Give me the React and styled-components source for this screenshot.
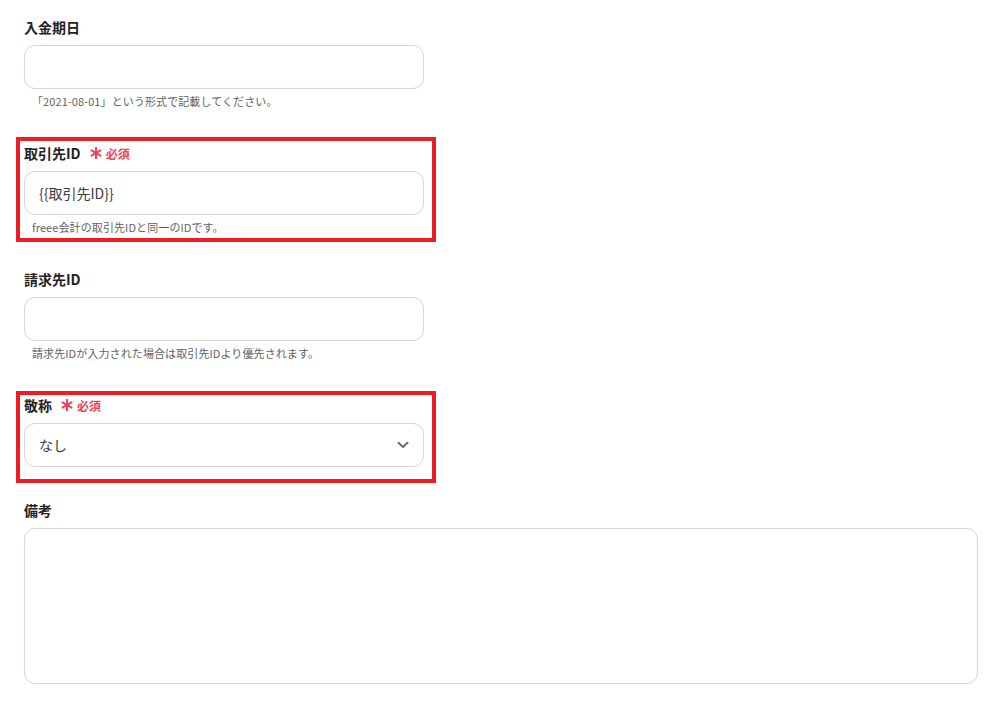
import React from "react";
import styled, { createGlobalStyle, css } from "styled-components";

const GlobalStyle = createGlobalStyle`
  body {
    margin: 0;
    background: #ffffff;
    font-family: "Noto Sans CJK JP", "Noto Sans", sans-serif;
    color: #222222;
  }
`;

const Form = styled.div`
  display: flex;
  flex-direction: column;
  gap: 35px;
  padding: 18px 0 0 24px;
`;

const Field = styled.div`
  position: relative;
  display: flex;
  flex-direction: column;
  width: ${({ wide }) => (wide ? "954px" : "400px")};
  margin-top: ${({ pullUp }) => (pullUp ? `-${pullUp}px` : "0")};

  ${({ highlight }) =>
    highlight &&
    css`
      &::after {
        content: "";
        position: absolute;
        top: ${highlight.top}px;
        left: -8px;
        right: -12px;
        bottom: ${highlight.bottom}px;
        border: 4px solid #ee1c25;
        pointer-events: none;
      }
    `}
`;

const LabelRow = styled.div`
  display: flex;
  align-items: center;
  height: 18px;
  margin-bottom: 9px;
`;

const Label = styled.span`
  font-size: 14px;
  font-weight: 700;
  line-height: 18px;
  color: #222222;
`;

const Required = styled.span`
  display: inline-flex;
  align-items: center;
  gap: 4px;
  margin-left: 9px;
  font-size: 12px;
  font-weight: 700;
  color: #f0405a;
`;

const Box = styled.div`
  box-sizing: border-box;
  display: flex;
  align-items: center;
  justify-content: space-between;
  height: ${({ tall }) => (tall ? "156px" : "44px")};
  padding: 0 14px;
  border: 1px solid #d3d6dc;
  border-radius: 11px;
  background: #ffffff;
  font-size: 14px;
  color: #3a3a3a;
`;

const Hint = styled.div`
  margin-top: 4px;
  padding-left: 8px;
  font-size: 11px;
  letter-spacing: 0.1px;
  line-height: 16px;
  color: #5f5f5f;
`;

const Asterisk = () => (
  <svg width="12" height="12" viewBox="0 0 12 12">
    <g stroke="#f0405a" strokeWidth="2" strokeLinecap="round">
      <line x1="6" y1="0.8" x2="6" y2="11.2" />
      <line x1="1.5" y1="3.4" x2="10.5" y2="8.6" />
      <line x1="1.5" y1="8.6" x2="10.5" y2="3.4" />
    </g>
  </svg>
);

const Chevron = () => (
  <svg width="12" height="8" viewBox="0 0 12 8">
    <path
      d="M1.5 1.8 L6 6 L10.5 1.8"
      fill="none"
      stroke="#6b6b6b"
      strokeWidth="2"
      strokeLinecap="round"
      strokeLinejoin="round"
    />
  </svg>
);

const FieldLabel = ({ children, required }) => (
  <LabelRow>
    <Label>{children}</Label>
    {required && (
      <Required>
        <Asterisk />
        必須
      </Required>
    )}
  </LabelRow>
);

export default function App() {
  return (
    <>
      <GlobalStyle />
      <Form>
        <Field>
          <FieldLabel>入金期日</FieldLabel>
          <Box />
          <Hint>「2021-08-01」という形式で記載してください。</Hint>
        </Field>

        <Field highlight={{ top: -7, bottom: -7 }}>
          <FieldLabel required>取引先ID</FieldLabel>
          <Box>{"{{取引先ID}}"}</Box>
          <Hint>freee会計の取引先IDと同一のIDです。</Hint>
        </Field>

        <Field>
          <FieldLabel>請求先ID</FieldLabel>
          <Box />
          <Hint>請求先IDが入力された場合は取引先IDより優先されます。</Hint>
        </Field>

        <Field highlight={{ top: -5, bottom: -16 }}>
          <FieldLabel required>敬称</FieldLabel>
          <Box>
            なし
            <Chevron />
          </Box>
        </Field>

        <Field wide pullUp={1}>
          <FieldLabel>備考</FieldLabel>
          <Box tall />
        </Field>
      </Form>
    </>
  );
}
